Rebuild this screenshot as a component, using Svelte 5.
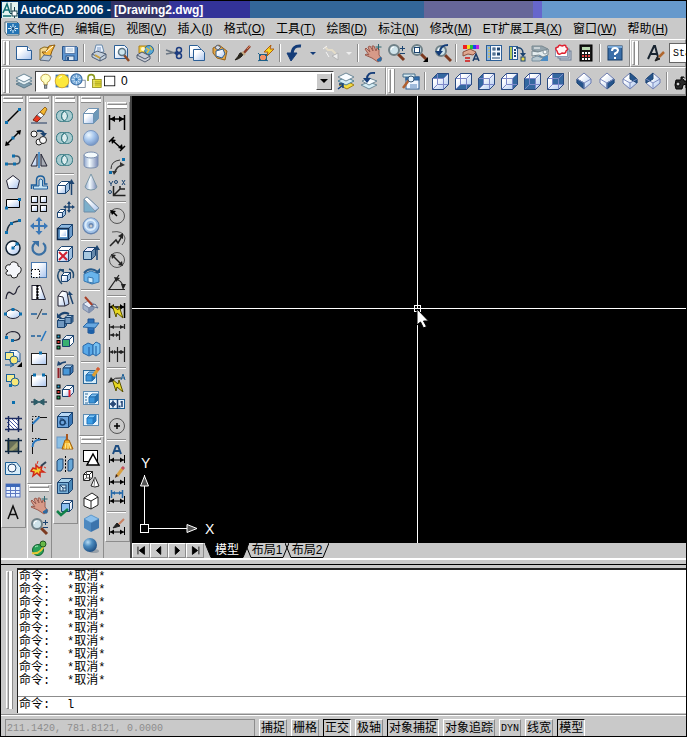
<script lang="ts">
  const NAVY = '#1c4470';
  const BLUE = '#3a78b8';
  const ICE = 'url(#ice)';

  // small drawing helpers, every icon lives on a 20x20 grid
  const p = (d: string, fill = 'none', stroke = '#000', w = 1) =>
    `<path d="${d}" fill="${fill}" stroke="${stroke}" stroke-width="${w}"/>`;
  const c = (x: number, y: number, r: number, fill = 'none', stroke = '#000', w = 1) =>
    `<circle cx="${x}" cy="${y}" r="${r}" fill="${fill}" stroke="${stroke}" stroke-width="${w}"/>`;
  const rect = (x: number, y: number, w: number, h: number, fill = 'none', stroke = '#000', sw = 1) =>
    `<rect x="${x}" y="${y}" width="${w}" height="${h}" fill="${fill}" stroke="${stroke}" stroke-width="${sw}"/>`;
  const dot = (x: number, y: number, fill = '#0b6fae') => rect(x - 2, y - 2, 3, 3, fill, 'none');
  const cube = (x: number, y: number, s: number, d: number, front = ICE, top = '#fff', side = '#9dbfe0', line = NAVY) =>
    p(`M${x} ${y}l${d} ${-d}h${s}l${-d} ${d}z`, top, line) +
    p(`M${x + s} ${y}l${d} ${-d}v${s}l${-d} ${d}z`, side, line) +
    p(`M${x} ${y}h${s}v${s}h${-s}z`, front, line);
  const wire = (face: string) =>
    p('M2.5 7.5l5-5h11v11l-5 5h-11z', ICE, '#6a78c0') +
    p(face, '#3468a0', NAVY) +
    p('M2.5 7.5h11v11M13.5 7.5l5-5M7.5 2.5v11h11M7.5 13.5l-5 5', 'none', '#7c88c8') +
    p('M2.5 7.5l5-5h11v11l-5 5h-11z', 'none', '#284a80');
  const iso = (face: string) =>
    p('M10 2l7 6v4l-7 6l-7-6v-4z', ICE, '#6c7cb0') +
    p(face, '#24548c', NAVY) +
    p('M3 8l7 4l7-4M10 12v6', 'none', '#7c8cc0');
  const lens = (x = 8, y = 7) =>
    p(`M${x + 4} ${y + 4}l6 6`, 'none', '#7c3a20', 3) + c(x, y, 5, '#cfe3ea', '#6f8087', 2) +
    p(`M${x - 3} ${y}q0-3 3-3`, 'none', '#fff');
  const hand =
    p('M3 5l4 4l-2-5l2-1l3 5l-1-5l2 0l2 5l1-3l2 1l0 6l3 4l-4 3l-6-4l-7-3l1-1l3 1l-4-6z', '#d79a88', '#9a5c50') +
    p('M14 17l4-3v4h-3z', '#2d6aa0', '#2d6aa0') +
    p('M15.500 1v6M12.500 4h6', 'none', '#2c6670');
  const bracket = (y = 16) => p(`M2.500 ${y - 5}v8M17.500 ${y - 5}v8M3 ${y}h14`) + p(`M3 ${y}l4-2.500v5zM17 ${y}l-4-2.500v5z`, '#000', 'none');
  const rings =
    '<rect x="1.500" y="4.500" width="11" height="11" rx="5" fill="#a9ccd0" stroke="#2f7680"/>' +
    '<rect x="6.500" y="4.500" width="11" height="11" rx="5" fill="#a9ccd0" stroke="#2f7680"/>' +
    p('M9.500 5q-6 5 0 10q6-5 0-10', '#dcecee', '#2f7680');
  const sheet = (x: number, y: number, w = 11, h = 12) => p(`M${x} ${y}h${w - 3}l3 3v${h - 3}h${-w}z`, ICE, '#2c5f96');
  const bolt = (x: number, y: number) => p(`M${x} ${y}l6 5l1-4l4 12l-6-5l-1 4z`, '#e8d820', '#5a5200');
  const legend = dot(4, 5, '#27a0d0') + dot(4, 10.500, '#d03028') + dot(4, 16, '#20a060') +
    rect(2, 3, 3, 3) + rect(2, 8.500, 3, 3) + rect(2, 14, 3, 3);
  const pyramidBrush = p('M2 10l5-3l6 3l-5 4z', '#e4ecf8', '#7c8aa8') + p('M2 10v5l6 4v-5z', '#a4b4cc', '#7c8aa8') + p('M8 14l5-4v5l-5 4z', '#8094b4', '#7c8aa8');

  const icons: Record<string, string> = {
    new: p('M2.500 3.500h11l4 4v9h-15z', ICE, '#2c5f96') + p('M13.500 3.500v4h4', '#fff', '#2c5f96'),
    open: p('M3 6l4-2l8 1l-4 12l-8 0z', '#f3d68a', '#8a6a1c') + p('M5 9l4 0l3-6l6-1l-3 6l-3 9z', '#f7b93c', '#8a5a10') + p('M3 17l4-5l8 1l-3 5z', '#b8c8d8', '#5c6c84') + p('M9 9l7-6', 'none', '#fff'),
    save: p('M2.500 3.500h14l1 1v13h-14l-1-1z', '#5c94d0', '#2a5488') + rect(5, 3.500, 10, 7, '#f2f8ff', '#5c7ca8') + rect(6, 13, 8, 4.500, '#dce8f4', '#2a5488') + p('M7 6h6M7 8h6', 'none', '#a8c0d8') + rect(7, 14, 2, 3, '#2a5488', 'none'),
    print: p('M5 10l2-8h6l2 7z', '#eaf2ff', '#6888a8') + p('M3 11l5-3l9 3v4l-6 3l-8-4z', '#c4d0dc', '#4c5c74') + p('M3 11l8 4l6-4M11 15v3', 'none', '#4c5c74') + p('M8 5h4M8 7h4', 'none', '#7898c0') + p('M6 12l5 3', 'none', '#c8a040', 2),
    preview: sheet(2.500, 2.500, 13, 13) + p('M12 12l5 6', 'none', '#8c4a28', 2.500) + c(10, 9, 3.500, '#cfe6f0', '#5c7484', 1.500),
    publish: p('M4 3h9l-1 7h-8z', '#f4d040', '#a87c18') + c(14, 7, 4.500, '#58a8d8', '#2c6890') + p('M11 5l3 2l-2 3M15 4l2 3', 'none', '#e0c040', 1.500) + p('M2 12l5-3l8 4v3l-5 3l-8-4z', '#c8ccd4', '#505c70') + p('M2 12l8 4l5-3', 'none', '#505c70') + c(8, 6, 2, '#fff8d0', 'none'),
    cut: p('M2 7l11 4M2 11l11-2', 'none', '#6a7684', 1.500) + c(15, 7, 2.500, 'none', '#1c3c80', 1.500) + c(15, 13, 2.500, 'none', '#1c3c80', 1.500) + p('M11 10l3-1M11 10l3 2', 'none', '#1c3c80', 2),
    copy: sheet(2.500, 2.500) + sheet(6.500, 6.500, 11, 11),
    paste: p('M3 5l6-3l8 6l-2 9l-8-2l-4-5z', '#e4a848', '#946018') + p('M7 2l4 2l-3 3l-3-2z', '#d8dce4', '#586478') + p('M6 8l7-2l2 5l-3 4l-6-2z', ICE, '#2c5f96'),
    match: p('M17 3l-7 8', 'none', '#8c3c28', 2.500) + p('M17 3l-3 3', 'none', '#d88860') + p('M11 10q-2 5-9 7q3-3 5-7z', '#28241c', '#28241c') + p('M9 9l3 3', 'none', '#c8b088', 2),
    blockedit: rect(3.500, 11.500, 7, 6, '#f09068', '#1c5f88') + p('M2 10l3 3M12 10l-3 3M2 18l3-2M12 18l-3-2', 'none', '#1c5f88') + p('M8 9l7-7l-1 4h4l-7 7l1-4z', '#f8d820', '#b05c10'),
    undo: p('M16 3q-9-1-9 9', 'none', '#143c78', 3) + p('M2 10h10l-6 8z', '#143c78', '#143c78'),
    redo: p('M4 4l3 3l4 0l4 4', 'none', '#e4dcc8', 2) + p('M11 13l6-3v7z', '#eee', '#b4b4b4') + p('M2 6l4-3M5 9l3 5', 'none', '#f4f4f4'),
    pan: hand,
    zoomrt: lens() + p('M16.500 3v5M14 5.500h5M14 10.500h5', 'none', '#1c4470'),
    zoomwin: lens() + rect(5.500, 4.500, 5, 5, '#fff', '#1c4470') + p('M19 14v5h-5z', '#000', 'none'),
    zoomprev: lens(9, 8) + p('M16 2q-7 0-8 6', 'none', '#143c78', 2) + p('M3 8h8l-4 5z', '#143c78', 'none'),
    props: rect(2, 2, 4, 4, '#f02020', 'none') + rect(6, 2, 3, 4, '#f0e020', 'none') + rect(9, 2, 3, 4, '#20c040', 'none') + rect(12, 2, 3, 4, '#2040f0', 'none') + rect(15, 2, 3, 4, '#c020e0', 'none') + p('M2 9l7-3l6 3l-3 3l-5-1l-5 2z', '#e0a890', '#8c5040') + p('M4 15h5M4 18h5', 'none', '#d04040', 2) + p('M12 18l3-7l3 7M13 16h4', 'none', '#1c3c68', 1.500),
    dc: rect(2.500, 2.500, 15, 15, '#f4f8ff', '#2c5f96') + rect(2.500, 2.500, 4, 15, '#8cb4e0', '#2c5f96') + p('M4 5h2M4 8h2M4 11h2M4 14h2', 'none', '#e8c030') + rect(9, 5, 2, 2, '#fff', NAVY) + rect(13.500, 5, 2, 2, '#fff', NAVY) + rect(9, 10, 2, 2, '#fff', NAVY) + rect(13.500, 10, 2, 2, '#fff', NAVY) + p('M8 15h8', 'none', NAVY),
    palettes: rect(2.500, 3.500, 8, 13, '#f4f8ff', '#2c5f96') + rect(2.500, 3.500, 3, 13, '#b0cc60', '#2c5f96') + p('M7 7h2M7 10h2M7 13h2', 'none', NAVY, 2) + p('M9 5q7-1 7 5', 'none', NAVY, 1.500) + p('M13 10h6l-3 4z', NAVY, 'none') + rect(14, 14, 4, 4, '#e8d850', NAVY),
    sheets: rect(9, 11, 9, 7, '#4c8cc4', 'none') + p('M2 3h10l6 3v3l-9 0l-7-2z', '#94a4ac', '#788890') + p('M2 8l6 1l10-3v6l-5 2l-4-2l-7 1z', '#e4ecee', '#788890') + p('M2 15l5-2l6 2l-3 3h-8z', '#b8c8d0', '#7890a0') + c(15, 9, 2, '#f8fafa', '#8898a0') + p('M4 5h6', 'none', '#fff'),
    markup: rect(7, 8, 11, 9, '#c8d0dc', '#6c7c94') + rect(5, 6, 11, 9, '#dce4f0', '#6c7c94') + rect(2.500, 4.500, 12, 9, '#fff', '#8c9cb4') + p('M4 8q-3-3 1-4q1-3 4-1q4-2 4 1q3 2 0 4q0 3-4 2q-4 3-5-2z', '#fff4f4', '#e02030', 1.500),
    calc: rect(4, 2, 12, 16, '#181818', '#000') + rect(6, 4, 8, 3, '#b8d8b0', 'none') + p('M6 10h2M9 10h2M12 10h2M6 16h2M9 16h2M12 16h2', 'none', '#fff', 2) + p('M6 13h2M9 13h2M12 13h2', 'none', '#e04040', 2),
    help: rect(3, 3, 14, 14, '#3a6ea8', '#143c68') + p('M3 3h14v2h-14z', '#78a8d8', 'none') + p('M7 8q0-3 3-3q3 0 3 2.500q0 1.500-3 3v1.500', 'none', '#fff', 2) + rect(9, 14, 2, 2, '#fff', 'none'),
    textstyle: p('M2 16l6-13h1l3 11M4 11h7', 'none', '#182430', 2) + p('M18 9l-5 5', 'none', '#b06830', 2.500) + p('M9 18l2-4l3 2z', '#202020', '#202020'),

    layers: p('M2 13l8-3l8 3l-8 4z', '#7f9fb0', '#5c7888') + p('M2 10l8-4l8 4l-8 4z', '#e4f0f4', '#6c8898') + p('M2 7l8-4l8 4l-8 4z', '#f8fcff', '#6c8898'),
    layercur: p('M3 14l8-4l7 4l-7 4z', '#f4dc40', '#a08018') + p('M2 10l8-4l8 4l-8 4z', '#d4ecf4', '#4c8098') + p('M2 6l8-4l8 4l-8 4z', '#f8fcff', '#6c8898') + p('M2 18l5-4M3 13h4v4', 'none', '#104080', 1.500),
    layerprev: p('M2 14l8-3l8 3l-8 4z', '#d4ecf4', '#6c8898') + p('M3 10l7-3l8 3l-8 4z', '#f8fcff', '#6c8898') + p('M16 2q-8-1-8 6', 'none', '#143c78', 2) + p('M4 7h8l-4 5z', '#143c78', 'none'),
    bulb: p('M7.500 15v-3q-4-2-4-5q0-5 6-5.500q6 .500 6 5.500q0 3-4 5v3z', '#ffffc0', '#b08c28') + rect(8, 15, 3, 4, '#a0a8b0', '#505860') + p('M8 5q-1 1-1 3', 'none', '#fff'),
    sun: rect(2, 2, 16, 16, '#3c78b0', 'none') + c(10, 10, 8.500, '#fce83c', '#d8a020') + p('M6 7q1-2 4-3', 'none', '#fffbd0', 1.500),
    freeze: rect(10, 9, 9, 9, '#fff', '#6c7c90') + c(8, 8, 7, '#7cacd8', '#3c70a8', 1.500) + p('M2 8h12M8 2v12M4 4l8 8M12 4l-8 8', 'none', '#e0f0ff') + c(8, 8, 2, '#3c80c0', 'none'),
    lock: p('M2.500 10v-4q0-4 4-4q4 0 4 4v4', 'none', '#8c9a20', 2) + rect(8, 8, 11, 10, '#e8e038', '#8c8818') + p('M8 11h11M8 13h11M8 15h11', 'none', '#a8a020') + p('M10 9v8', 'none', '#fffcc0'),
    swatch: rect(3, 4, 13, 12, '#fff', '#000'),

    named: rect(5, 6, 13, 12, '#f0f6ff', '#2c5f96') + rect(5, 6, 13, 3, '#3070b0', '#2c5f96') + p('M2 3h12v3h-12z', '#d8ecf4', '#48708c') + p('M8 9l-6 8', 'none', '#b06030', 2.500) + c(10, 8, 3, '#e8f4fc', '#385878') + p('M9 14h7M9 16h7', 'none', '#5080b8'),
    vtop: wire('M2.500 7.500l5-5h11l-5 5z'),
    vbottom: wire('M2.500 18.500l5-5h11l-5 5z'),
    vleft: wire('M2.500 7.500l5-5v11l-5 5z'),
    vright: wire('M13.500 7.500l5-5v11l-5 5z'),
    vfront: wire('M2.500 7.500h11v11h-11z'),
    vback: wire('M7.500 2.500h11v11h-11z'),
    isosw: iso('M3 8l7 4v6l-7-6z'),
    isose: iso('M17 8l-7 4v6l7-6z'),
    isone: iso('M10 2l7 6v4l-7-4z'),
    isonw: iso('M10 2l-7 6v4l7-4z'),
    camera: p('M3 14l1-5h5v-3h3v4l2 0l1-4h3v11h-4v-4l-3 1l-1 4h-6z', '#282828', '#000') + c(6, 13, 2, '#ccc', '#000') + p('M11 7l4 3', 'none', '#eee'),

    line: p('M4 16l12-12', 'none', '#000', 1.500) + dot(4, 17) + dot(17, 4),
    xline: p('M4 16l12-12', 'none', '#000', 1.500) + p('M2 18l1-5l4 4zM18 2l-1 5l-4-4z', '#000', 'none') + dot(10.500, 10.500),
    pline: p('M4 14h9q4 0 4-4q0-4-4-4h-1', 'none', '#456', 1.500) + dot(4, 14.500) + dot(12, 14.500) + dot(11, 6.500),
    polygon: p('M10 3.500l6.500 5l-2 8h-9l-2-8z', ICE, '#223'),
    rectangle: p('M3.500 5.500h13v8h-13z', ICE, '#000') + dot(4, 14.500) + dot(17, 6),
    arc: p('M4 17q0-11 12-12', 'none', '#234', 1.500) + dot(4, 17) + dot(9, 8) + dot(17, 5),
    circle: c(10, 10, 7, ICE, '#123', 1.500) + p('M10 10l4-4', 'none', '#123') + dot(10.500, 10.500) + dot(14.500, 6.500),
    revcloud: p('M5 11q-4-2-2-5q2-2 4-1q1-4 5-3q4 1 3 4q4 1 3 5q-1 3-3 3q0 4-4 4q-3 0-3-3q-4 1-5-1q-1-2 2-3z', '#f4f6fa', '#222'),
    spline: p('M3 17q1-9 5-6q3 3 5-1q1-5 4-6', 'none', '#223', 1.200),
    ellipse: '<ellipse cx="10" cy="10" rx="7" ry="4.500" fill="url(#ice)" stroke="#223"/>' + dot(3, 10.500) + dot(18, 10.500) + dot(10.500, 6),
    ellarc: p('M10 14.500q7 0 7-4q-1-5-8-5q-5 1-6 4', 'none', '#223', 1.200) + dot(4, 12) + dot(10, 15),
    insert: sheet(7, 2.500, 10, 11) + rect(2.500, 4.500, 8, 7, '#f4ec90', '#1c5f96') + c(11, 12, 4, '#f8e878', '#1c5f96') + p('M2 17h8M7 15l4 2l-4 2', 'none', '#1c5f96') + p('M19 14v5h-5z', '#000', 'none'),
    block: rect(3.500, 4.500, 8, 7, '#f4ec90', '#1c5f96') + c(12, 12, 4, '#f8e878', '#1c5f96') + dot(8, 16),
    point: dot(11, 11),
    hatch: p('M4 4h12v12h-12z', '#fff', 'none') + p('M4 8l8 8M4 4l12 12M8 4l8 8M12 4l4 4M4 12l4 4', 'none', '#4858a8') + p('M2 4.500h17M2 15.500h17M5.500 2v16M15.500 2v16', 'none', '#1c2c60', 1.500),
    gradient: rect(4, 4, 12, 12, '#687058', 'none') + p('M4 16l12-12v6l-8 6z', '#9a9c70', 'none') + p('M2 4.500h17M2 15.500h17M5.500 2v16M15.500 2v16', 'none', '#102840', 1.500),
    region: p('M2.500 4.500h11l4 5v7h-15z', '#d8ecf8', '#1c5f96') + c(9, 10, 4, '#f4f8fc', NAVY),
    table: rect(3, 4, 14, 13, '#e8f2ff', '#5c78c0') + rect(3, 4, 14, 3, '#3c68b8', 'none') + p('M3 10.500h14M3 13.500h14M7.500 7v10M12.500 7v10', 'none', '#5c78c0'),
    mtext: p('M5 17l5-13l5 13M7 12.500h6', 'none', '#101010', 1.500),

    erase: p('M2 17h16', 'none', '#203860') + p('M4 14l4-5l4 3l-4 4z', '#e83820', '#7c2010') + p('M8 9l3-3l4 3l-3 3z', '#f8fafc', '#6c7480') + p('M11 6l5-5l2 2l-3 6z', '#f4b830', '#94641c'),
    copyobj: c(5, 6, 3, '#f8f8f8', '#222') + c(10, 14, 3, '#f8f8f8', '#222') + c(14, 12, 3.500, '#f8f8f8', '#222') + p('M8 3q6-1 7 3', 'none', NAVY, 2) + p('M11 5h7l-3 4z', NAVY, 'none'),
    mirror: p('M8 4v12h-6z', ICE, '#223') + p('M12 4v12h6z', '#a8acb4', '#223') + p('M10 2v16', 'none', '#2c80c8', 1.500),
    offset: p('M2.500 17v-4h5v-5q0-4 4-4q4 0 4 4v4h3', 'none', '#1c5f9c', 1.500) + p('M4.500 17h14v-3h-5v-6q-2-2-3.500 0v6h-5.500z', '#c8e4f4', '#1c5f9c'),
    array: rect(2.500, 2.500, 6, 6, ICE, '#111') + rect(11.500, 2.500, 6, 6, ICE, '#111') + rect(2.500, 11.500, 6, 6, ICE, '#111') + rect(11.500, 11.500, 6, 6, ICE, '#111'),
    move: p('M10 4v12M4 10h12', 'none', BLUE, 2) + p('M10 1l3.500 4h-7zM10 19l3.500-4h-7zM1 10l4-3.500v7zM19 10l-4-3.500v7z', BLUE, 'none'),
    rotate: p('M6 5a6.500 6.500 0 1 0 8 0', 'none', '#3a70a4', 2.200) + p('M3 3h7v6z', '#3a70a4', 'none'),
    scale: rect(2.500, 2.500, 15, 15, ICE, '#4878b0') + '<rect x="2.500" y="9.500" width="8" height="8" fill="#fff" stroke="#000" stroke-dasharray="1.500 1.500"/>',
    stretch: rect(3, 3.500, 5, 14, '#fff', '#223') + p('M8.500 3.500l3 0l5 14h-8z', ICE, '#223') + '<path d="M8.500 3v15" stroke="#000" stroke-width="2" stroke-dasharray="2 1"/>',
    trim: p('M2 10h6M13 10h5', 'none', '#1c5f9c', 1.500) + p('M8 15l5-10', 'none', '#333'),
    extend: p('M2 10h4M8 10h4', 'none', '#1c5f9c', 1.500) + p('M12 15l5-10', 'none', '#2878c0', 1.500),
    breakpt: rect(2.500, 5.500, 15, 11, ICE, '#222') + dot(12, 5.500),
    breakln: p('M5 5.500h-2.500v11h15v-11h-2.500', ICE, '#222') + dot(6, 5.500) + dot(15, 5.500),
    join: p('M2 10h5M13 10h5', 'none', '#345', 1.500) + p('M5 7l5 3l-5 3zM15 7l-5 3l5 3z', '#2c5c68', '#2c5c68'),
    chamfer: '<path d="M3.500 9v-6.500h7" fill="none" stroke="#000" stroke-dasharray="1.500 1.500"/>' + p('M3.500 10l7-7', 'none', '#2878c0', 2) + p('M3.500 18v-8M11 3.500h7', 'none', '#111'),
    fillet: '<path d="M3.500 9v-6.500h7" fill="none" stroke="#000" stroke-dasharray="1.500 1.500"/>' + p('M3.500 11q0-7 8-7.500', 'none', '#2878c0', 2) + p('M3.500 18v-7M11 3.500h7', 'none', '#111'),
    explode: p('M4 10l3 1l0-4l3 3l3-2l-1 4l3 2l-4 0l0 4l-3-3l-4 3l1-4l-3-1z', '#f4d030', '#d02818', 1.500) + p('M12 8l5-4', 'none', '#345', 2) + p('M8 6l1-3M15 9l2 1', 'none', '#e03020'),
    orbit: c(9, 11, 5.500, '#28a058', '#106030') + p('M3 14q9 2 13-10', 'none', '#e8c838', 2) + c(14, 5, 3, '#68b848', '#205820') + p('M6 8q1-1 3-1', 'none', '#b0f0c0'),

    union: rings,
    extrude: cube(2.500, 7.500, 8, 4, ICE) + p('M16.500 17v-12', 'none', NAVY, 1.500) + p('M13.500 6l3-5l3 5z', NAVY, 'none'),
    moveface: cube(2.500, 12.500, 5, 3, ICE) + p('M14 3v8M10 7h8', 'none', NAVY, 1.500) + p('M14 1l2 3h-4zM14 13l2-3h-4zM8 7l3-2v4zM20 7l-3-2v4z', NAVY, 'none'),
    offsetface: cube(2.500, 6.500, 11, 4, '#5c94c8', '#8cb8e0', '#6c9ccc') + rect(5.500, 8.500, 6, 6, ICE, '#fff') + p('M2.500 6.500h11v11h-11z', 'none', '#102c50', 1.500),
    deleteface: cube(2.500, 6.500, 11, 4, ICE) + p('M4 8l8 8M12 8l-8 8', 'none', '#d02030', 2),
    rotateface: cube(6.500, 9.500, 6, 3, ICE) + p('M6 3q-7 7 1 15M14 3q6 2 4 9', 'none', '#244c70', 1.500) + p('M3 3h6v4z', '#244c70', 'none'),
    taperface: p('M3 8l4-5l5 1l2 12l-4 2h-7z', ICE, '#223') + p('M3 8l5 1l2 9', 'none', '#223') + p('M18 16l-3-9', 'none', NAVY, 1.500) + p('M14 3l4 4h-5z', NAVY, 'none'),
    copyface: cube(2.500, 10.500, 7, 2, '#7098c0', '#a8c8e0', '#4878a8') + cube(10, 7.500, 6, 2, '#7098c0', '#a8c8e0', '#4878a8') + p('M4 6q4-5 10-2', 'none', NAVY, 2) + p('M2 3v5h5z', NAVY, 'none'),
    colorface: legend + cube(7.500, 7.500, 7, 4, '#38b070', ICE, '#fff'),
    copyedge: cube(8, 8, 7, 3, '#4898d8', '#a8d0f0', BLUE) + p('M3.500 8v10', 'none', '#902028', 2) + p('M5.500 8v10', 'none', '#555') + p('M4 5q3-3 7-3', 'none', NAVY, 1.500) + p('M2 6l1-5l4 3z', NAVY, 'none'),
    coloredge: legend + cube(7.500, 7.500, 7, 4, ICE, '#fff', ICE) + p('M14.500 8v7', 'none', '#e02030', 2),
    imprint: cube(2.500, 6.500, 11, 4, '#6ca4dc', '#b8d8f4', BLUE) + c(7.500, 12.500, 2.500, 'none', NAVY, 1.500) + p('M5 9q5-1 6 5', 'none', NAVY),
    clean: rect(2, 5, 9, 11, '#8cc0e4', '#6898c8') + p('M12 2v6', 'none', '#a85820', 2) + p('M10 8h4l4 9h-11z', '#f0b028', '#a06010') + p('M11 11l-1 6M13 11v6M14 11l2 6', 'none', '#fff0a0'),
    separate: p('M2 7l2-2h4v9l-2 3h-4z', '#68a8d8', NAVY) + p('M13 7l2-2h3v9l-2 3h-3z', '#68a8d8', NAVY) + '<path d="M10.500 2v16" stroke="#000" stroke-dasharray="2 1.500"/>',
    shell: cube(2.500, 6.500, 11, 4, '#78b0d8', '#a8d0e8', '#4888b8') + rect(5, 9, 6, 6, '#d0e8f4', NAVY) + p('M5 9l3 3h3M8 12v3', 'none', NAVY),
    check: cube(6.500, 5.500, 8, 3, '#8cc0f0', ICE, ICE) + p('M2 13l4 4l7-6', 'none', '#108048', 2.500),

    sbox: cube(2.500, 7.500, 10, 5, ICE, '#fff', '#6c98b8', '#7094b4'),
    ssphere: c(10, 10, 7.500, 'url(#ball)', '#7c98c0'),
    scyl: p('M3 5v10q0 3 7 3q7 0 7-3v-10', 'url(#tube)', '#7c90b0') + '<ellipse cx="10" cy="5" rx="7" ry="3" fill="#f4fafc" stroke="#7c90b0"/>',
    scone: p('M10 2l6 13q-1 3-6 3q-5 0-6-3z', 'url(#tube)', '#7c98a8'),
    swedge: p('M3 5l3-2l12 11l-4 4h-11z', '#7cb0cc', '#6c8ca8') + p('M6 3l12 11l-4 3l-11-12z', ICE, '#8094a8'),
    storus: c(10, 10, 5, 'none', '#6484b0', 7) + c(10, 9.500, 5, 'none', '#a4c4e8', 5) + c(9.500, 9, 5, 'none', '#dcecfa', 2),
    sextrude: cube(2.500, 7.500, 8, 4, '#a8c8e0', '#eef', '#68a') + p('M16 16v-11', 'none', NAVY, 1.500) + p('M13 6l3-5l3 5z', NAVY, 'none'),
    srevolve: p('M3 8l7-3l8 3v8l-7 2l-8-3z', '#68b4ec', '#3878b0') + p('M7 11l5 1v5l-5-1z', '#c8e8fc', '#3878b0') + p('M3 7q6-7 14-1', 'none', '#285c8c', 2) + p('M14 7h5v-5z', '#285c8c', 'none'),
    sslice: pyramidBrush + p('M4 3l8 9', 'none', '#a84028', 2) + p('M10 12l4-2l3 4z', '#d8e0e8', '#607090'),
    ssection: p('M7 3h6v14h-6z', '#2c70b8', '#1c5090') + p('M2 11l4-4h12l-4 5z', '#68a8e0', '#2868a8') + p('M8 14h5v3q-3 2-5 0z', '#1c60a8', 'none'),
    sinterf: p('M2 8l5-3l5 2v9l-4 2l-6-3z', '#58a8e8', '#2868a8') + p('M12 7l3-3l4 2v9l-4 3l-3-2z', '#78c0f0', '#2868a8') + p('M8 9v8M15 8v9', 'none', '#1c58a0'),
    sdraw: rect(2.500, 4.500, 13, 13, '#d8ecf8', '#2c6898') + cube(5, 9, 6, 3, '#3c94d8', '#80c0f0', '#2470b0', '#2470b0') + p('M18 2l-6 8', 'none', '#e0a030', 3) + p('M18 2l-2 2', 'none', '#d05840', 3),
    sview: rect(2.500, 3.500, 15, 13, '#e8f4fc', '#5c8cb4') + cube(8, 9, 6, 3, '#3c94d8', '#80c0f0', '#2470b0', '#2470b0') + p('M4 6h3M4 9h2M4 12h2M4 15h3', 'none', '#2c6898'),
    sprofile: rect(2.500, 4.500, 15, 11, '#e8f4fc', '#5c8cb4') + cube(6, 8, 6, 3, '#3ca0e8', '#80c8f8', '#2478c0', '#2478c0'),
    shade2d: rect(2.500, 3.500, 14, 11, '#fff', '#000') + p('M12 7l6 11h-12z', '#fff', '#000', 1.500),
    shade3d: cube(2.500, 5.500, 6, 3, '#fff', '#fff', '#fff', '#222') + p('M5.500 3v6h6M5.500 9l-3 2', 'none', '#555') + p('M14 8l4 9q-4 2-8 0z', '#fff', '#222') + p('M14 8l-1 10', 'none', '#888'),
    hidden: p('M3 7l8-5l6 4v8l-7 4l-7-3z', '#fff', '#222') + p('M3 7l7 3l7-4M10 10v8', 'none', '#222'),
    flat: p('M3 6l7-4l8 4l-8 4z', '#8cc0ec', '#5c98cc') + p('M3 6l7 4v9l-7-4z', '#4c88c0', 'none') + p('M18 6l-8 4v9l8-4z', '#3c74ac', 'none'),
    gouraud: '<ellipse cx="13" cy="16" rx="5" ry="2" fill="#98a0a8"/>' + c(9, 10, 7, 'url(#deep)', 'none'),

    dlinear: p('M2.500 3v15M17.500 3v15M3 7h14', 'none', '#000', 1.500) + p('M3 7l5-3v6zM17 7l-5-3v6z', '#000', 'none'),
    daligned: p('M2 8l5-5M13 17l5-5M5 6l10 9', 'none', '#000', 1.500) + p('M4 5l5 1l-4 4zM16 15l-5-1l4-4z', '#000', 'none'),
    darc: dot(4, 17) + dot(17, 4) + p('M4 13q0-8 9-9', 'none', '#333') + p('M8 17q1-7 8-8', 'none', '#333', 1.500) + p('M5 15l5 0l-3 4zM18 9l-5-3v5z', '#333', 'none'),
    dordinate: p('M6.500 8v9.500h12M7 17l6-6h5M13 11v-3', 'none', '#222', 1.500) + p('M2 3l2 3l2-3M4 6v2M15 2l3 5M18 2l-3 5', 'none', '#1c4470') + c(9, 4, 1.500, 'none', '#1c4470') + c(3, 14, 1.500, 'none', '#1c4470'),
    dradius: c(10, 10, 7.500, 'none', '#555') + p('M10 10l-5-5', 'none', '#000', 1.500) + p('M3 4l6 1l-4 4z', '#000', 'none'),
    djogged: p('M5 4q11-2 13 6q0 4-3 7', 'none', '#555') + p('M3 18l6-6l2 3l4-7', 'none', '#222', 1.500) + p('M16 5v6l-5-3z', '#222', 'none'),
    ddiameter: c(10, 10, 7.500, 'none', '#555') + p('M6 6l8 8', 'none', '#222', 1.500) + p('M4 4l5 1l-4 4zM16 16l-5-1l4-4z', '#222', 'none'),
    dangular: p('M12 3l-10 14.500h16M8 7q7 1 8 8', 'none', '#222', 1.200) + p('M7 5l6 1l-4 4zM16 18l-2-6h5z', '#222', 'none'),
    dquick: p('M2.500 3v15M17.500 3v15M3 7h14', 'none', '#000', 1.500) + p('M3 7l4-3v6zM17 7l-4-3v6z', '#000', 'none') + bolt(5, 5),
    dbaseline: p('M2.500 2v16M17.500 2v5M12.500 9v9M3 5h14M3 13h9', 'none', '#222', 1.200) + p('M3 5l4-2v4zM17 5l-4-2v4zM3 13l4-2v4zM12 13l-3-2v4z', '#222', 'none'),
    dcontinue: p('M2.500 3v15M10.500 3v15M17.500 3v15M3 8h14', 'none', '#222', 1.200) + p('M3 8l3-2v4zM10 8l-3-2v4zM11 8l3-2v4zM17 8l-3-2v4z', '#222', 'none'),
    dleader: bolt(5, 7) + p('M4 9q4-4 10-3', 'none', '#222') + p('M1 11l3-6l3 4z', '#222', 'none') + p('M14 8l2-6l2 6M15 6h3', 'none', '#1c5f96'),
    dtolerance: rect(2.500, 5.500, 15, 9, '#e4f0fc', '#1c5f96') + p('M10.500 5v10M6 6.500v7M3 10h6M15 7v6M13.500 8h1', 'none', '#1c3f70', 1.500) + c(6, 10, 2, 'none', '#1c3f70') + rect(12, 12, 1, 1, NAVY, NAVY),
    dcenter: c(10, 10, 7.500, 'none', '#555') + p('M10 7v6M7 10h6', 'none', '#000', 1.500),
    dedit: p('M6 10l3-8h2l3 8M7.500 7h5', 'none', '#1c4c80', 2) + bracket(),
    dtedit: p('M16 2l-6 8', 'none', '#d8a040', 3) + p('M8 12l1-4l2 2z', '#402010', 'none') + p('M15 3l2-2', 'none', '#c05060', 3) + bracket(),
    dupdate: p('M4.500 2v8M15.500 2v8M5 5h10', 'none', '#2468a8', 1.500) + p('M5 5l3-2v4zM15 5l-3-2v4z', '#2468a8', 'none') + bracket(13),
    dstyle: p('M17 3l-6 6', 'none', '#c88060', 2) + p('M6 12l4-5l3 3z', '#222', '#222') + bracket()
  };

  const standard = 'new open save | print preview publish | cut copy paste match blockedit | undo caret redo caretoff | pan zoomrt zoomwin zoomprev | props dc palettes sheets markup calc | help'.split(' ');
  const views = 'named | vtop vbottom vleft vright vfront vback | isosw isose isone isonw | camera'.split(' ');

  const columns = [
    ['line xline pline polygon rectangle arc circle revcloud spline ellipse ellarc insert block point hatch gradient region table mtext'],
    ['erase copyobj mirror offset array move rotate scale stretch trim extend breakpt breakln join chamfer fillet explode', 'pan zoomrt orbit'],
    ['union union union | extrude moveface offsetface deleteface rotateface taperface copyface colorface | copyedge coloredge | imprint clean separate shell check'],
    ['sbox ssphere scyl scone swedge storus | sextrude srevolve | sslice ssection sinterf | sdraw sview sprofile', 'shade2d shade3d hidden flat gouraud'],
    ['dlinear daligned darc dordinate | dradius djogged ddiameter dangular | dquick dbaseline dcontinue | dleader dtolerance dcenter | dedit dtedit dupdate | dstyle']
  ].map((bars) => bars.map((bar) => bar.split(' ')));

  const menus = [
    ['文件', 'F'], ['编辑', 'E'], ['视图', 'V'], ['插入', 'I'], ['格式', 'O'], ['工具', 'T'],
    ['绘图', 'D'], ['标注', 'N'], ['修改', 'M'], ['ET扩展工具', 'X'], ['窗口', 'W'], ['帮助', 'H']
  ];

  const navButtons = [
    { label: 'first', d: 'M4.500 3v9M12 3v9l-6-4.500z' },
    { label: 'previous', d: 'M10 3v9l-5-4.500z' },
    { label: 'next', d: 'M6 3v9l5-4.500z' },
    { label: 'last', d: 'M12.500 3v9M5 3v9l6-4.500z' }
  ];
  const layouts = ['模型', '布局1', '布局2'];
  let activeLayout = $state('模型');

  const history = Array(9).fill('*取消*');
  let command = $state('l');

  let modes = $state([
    { name: '捕捉', on: false },
    { name: '栅格', on: false },
    { name: '正交', on: true },
    { name: '极轴', on: false },
    { name: '对象捕捉', on: true },
    { name: '对象追踪', on: false },
    { name: 'DYN', on: false },
    { name: '线宽', on: false },
    { name: '模型', on: true }
  ]);

  const cursor = { x: 285, y: 212 };
</script>

{#snippet icon(name: string)}
  <svg class="icon" viewBox="0 0 20 20" aria-hidden="true">{@html icons[name]}</svg>
{/snippet}

{#snippet tools(items: string[])}
  {#each items as item}
    {#if item === '|'}
      <span class="sep"></span>
    {:else if item === 'caret' || item === 'caretoff'}
      <button class="caret" class:off={item === 'caretoff'} aria-label="history list"></button>
    {:else}
      <button class="tool" aria-label={item}>{@render icon(item)}</button>
    {/if}
  {/each}
{/snippet}

<svg class="defs" width="0" height="0" aria-hidden="true">
  <defs>
    <linearGradient id="ice" x1="0" y1="0" x2="1" y2="1">
      <stop offset="0.3" stop-color="#ffffff" />
      <stop offset="1" stop-color="#a9c4ee" />
    </linearGradient>
    <linearGradient id="tube">
      <stop offset="0" stop-color="#8ea4cc" />
      <stop offset="0.4" stop-color="#f4fcff" />
      <stop offset="1" stop-color="#7888b4" />
    </linearGradient>
    <radialGradient id="ball" cx="0.35" cy="0.3" r="0.75">
      <stop offset="0" stop-color="#eef8ff" />
      <stop offset="0.5" stop-color="#a4c4ec" />
      <stop offset="1" stop-color="#7090c0" />
    </radialGradient>
    <radialGradient id="deep" cx="0.35" cy="0.3" r="0.75">
      <stop offset="0" stop-color="#b8dcf4" />
      <stop offset="0.4" stop-color="#4c8cc0" />
      <stop offset="1" stop-color="#1c4c80" />
    </radialGradient>
  </defs>
</svg>

<div class="window">
  <header class="title-bar">
    <svg class="logo" viewBox="0 0 16 16" aria-hidden="true">
      <rect width="16" height="16" fill="#e4f4f0" />
      <path d="M1 11l4-9l3 9M2 8h5M1 14h8" fill="none" stroke="#0f6c70" stroke-width="1.500" />
      <path d="M9 1v9M12.500 5v11M8 11.500h8" fill="none" stroke="#17404c" />
      <rect x="10" y="9" width="5" height="5" fill="#fff" stroke="#17404c" />
    </svg>
    <h1>AutoCAD 2006 - [Drawing2.dwg]</h1>
  </header>

  <nav class="menu-bar">
    <svg class="logo" viewBox="0 0 16 16" aria-hidden="true">
      <path d="M1 1h12l2 2v11h-12l-2-3z" fill="#f4fbff" stroke="#4a6878" />
      <rect x="3" y="2" width="12" height="11" fill="#2474b4" />
      <path d="M9 3v9M4 7.500h10M6 5l6 5M12 5l-6 5" stroke="#e0f4ff" />
      <circle cx="9" cy="7.500" r="1.500" fill="#124c84" />
    </svg>
    {#each menus as [name, key]}
      <button class="menu">{name}(<u>{key}</u>)</button>
    {/each}
  </nav>

  <div class="tool-row">
    <div class="bar">
      <span class="grip"></span>
      {@render tools(standard)}
    </div>
    <div class="bar grow">
      <span class="grip"></span>
      <button class="tool style-tool" aria-label="text style">{@render icon('textstyle')}</button>
      <select class="style-select" aria-label="text style name">
        <option>Standard</option>
      </select>
    </div>
  </div>

  <div class="tool-row">
    <div class="bar layer-bar">
      <span class="grip"></span>
      <button class="tool" aria-label="layer manager">{@render icon('layers')}</button>
      <div class="layer-box">
        {#each ['bulb', 'sun', 'freeze', 'lock', 'swatch'] as name}
          {@render icon(name)}
        {/each}
        <select aria-label="layer">
          <option>0</option>
        </select>
        <span class="drop"></span>
      </div>
      {@render tools(['layercur', 'layerprev'])}
    </div>
    <div class="bar grow">
      <span class="grip"></span>
      {@render tools(views)}
    </div>
  </div>

  <main class="workspace">
    <div class="palettes">
      {#each columns as bars, i}
        <div class="column" class:lowered={i === 4}>
          {#each bars as bar}
            <div class="v-bar">
              <span class="v-grip"></span>
              {@render tools(bar)}
            </div>
          {/each}
        </div>
      {/each}
    </div>

    <section class="drawing">
      <div class="canvas">
        <div class="cross-h" style:top="{cursor.y}px"></div>
        <div class="cross-v" style:left="{cursor.x}px"></div>
        <svg class="pointer" style:left="{cursor.x - 3}px" style:top="{cursor.y - 3}px" viewBox="0 0 16 24" aria-hidden="true">
          <rect x="0.500" y="0.500" width="6" height="6" fill="#000" stroke="#fff" />
          <path d="M3.500 1v5M1 3.500h5" stroke="#fff" />
          <path d="M3 4v16l3.500-3l3 6l3-1.500l-3-5.500h5z" fill="#fff" stroke="#000" />
        </svg>
        <svg class="ucs" viewBox="0 0 80 80" aria-hidden="true">
          <g fill="none" stroke="#fff" shape-rendering="crispEdges">
            <rect x="5.500" y="65.500" width="8" height="8" />
            <path d="M9.500 65v-49M14 69.500h48" />
          </g>
          <path d="M9.500 17l4 10h-8zM62 69.500l-10-4v8z" fill="#555" stroke="#fff" />
          <text x="6" y="9">Y</text>
          <text x="70" y="75">X</text>
        </svg>
      </div>

      <div class="layout-tabs">
        {#each navButtons as nav}
          <button class="nav" aria-label={nav.label}>
            <svg viewBox="0 0 16 15"><path d={nav.d} fill="#000" stroke="#000" stroke-width="1" /></svg>
          </button>
        {/each}
        <div class="tabs">
          {#each layouts as name}
            <button class="tab" class:active={activeLayout === name} onclick={() => (activeLayout = name)}>
              <svg viewBox="0 0 44 15" preserveAspectRatio="none" aria-hidden="true">
                <path d="M0 0L6 14.500H38L44 0" />
              </svg>
              <span>{name}</span>
            </button>
          {/each}
        </div>
      </div>
    </section>
  </main>

  <section class="command">
    <span class="grip"></span>
    <div class="command-text">
      <div class="history">
        {#each history as entry}
          <p><span class="prompt">命令:</span>{entry}</p>
        {/each}
      </div>
      <label class="entry">
        <span class="prompt">命令:</span>
        <input bind:value={command} spellcheck="false" />
      </label>
    </div>
  </section>

  <footer class="status-bar">
    <output class="coords">211.1420, 781.8121, 0.0000</output>
    {#each modes as mode}
      <button
        class="mode"
        class:on={mode.on}
        class:latin={mode.name === 'DYN'}
        aria-pressed={mode.on}
        onclick={() => (mode.on = !mode.on)}
      >{mode.name}</button>
    {/each}
  </footer>
</div>

<style>
  :global(body) {
    background: #c9c9c9;
  }

  .window {
    display: flex;
    flex-direction: column;
    box-sizing: border-box;
    height: 100vh;
    min-height: 700px;
    overflow: hidden;
    border: 1px solid #000;
    background: #c9c9c9;
    color: #000;
    font-family: 'Liberation Sans', 'Noto Sans CJK SC', sans-serif;
    font-size: 12px;
  }

  .defs {
    position: absolute;
  }

  button,
  select,
  input {
    margin: 0;
    padding: 0;
    border: 0;
    border-radius: 0;
    background: none;
    color: inherit;
    font: inherit;
    appearance: none;
    outline: none;
  }

  .title-bar {
    display: flex;
    align-items: center;
    gap: 2px;
    flex: none;
    height: 17px;
    padding-left: 1px;
    background: linear-gradient(
      to right,
      #003366 16%,
      #333366 16% 24.5%,
      #333399 24.5% 36.3%,
      #336699 36.3% 61.7%,
      #666699 61.7% 77.6%,
      #6666cc 77.6% 79%,
      #6699cc 79%
    );
    color: #fff;
  }

  .title-bar h1 {
    margin: 0;
    font-size: 12px;
    line-height: 16px;
    white-space: nowrap;
  }

  .logo {
    flex: none;
    width: 16px;
    height: 16px;
  }

  .menu-bar {
    display: flex;
    align-items: center;
    flex: none;
    gap: 11px;
    height: 21px;
    padding-left: 3px;
  }

  .menu-bar .logo {
    margin-right: -6px;
  }

  .menu {
    flex: none;
    line-height: 16px;
    white-space: nowrap;
  }

  .tool-row {
    display: flex;
    flex: none;
    height: 28px;
    overflow: hidden;
  }

  .bar {
    display: flex;
    align-items: center;
    flex: none;
    box-sizing: border-box;
    padding: 0 3px 0 1px;
    border-top: 1px solid #fff;
    border-left: 1px solid #fff;
    border-right: 1px solid #8c8c8c;
    border-bottom: 1px solid #8c8c8c;
  }

  .bar.grow {
    flex: 1 0 0;
    width: 0;
  }

  .layer-bar {
    padding-right: 5px;
  }

  .grip {
    flex: none;
    box-sizing: border-box;
    width: 3px;
    height: 24px;
    margin-right: 6px;
    border: 1px solid #fff;
    border-right-color: #8c8c8c;
    border-bottom-color: #8c8c8c;
    box-shadow: 3px 0 #fff, 4px 0 #8c8c8c;
  }

  .grow .grip {
    margin-right: 8px;
  }

  .icon {
    display: block;
    flex: none;
    width: 20px;
    height: 20px;
  }

  .tool {
    display: flex;
    align-items: center;
    justify-content: center;
    flex: none;
    width: 23px;
    height: 22px;
  }

  .tool:hover {
    background: #dcdcdc;
  }

  .sep {
    flex: none;
    box-sizing: border-box;
    width: 6px;
    height: 18px;
    border-left: 2px solid #c9c9c9;
    border-right: 2px solid #c9c9c9;
    background: linear-gradient(to right, #8c8c8c 50%, #fff 50%);
  }

  .caret {
    display: flex;
    justify-content: center;
    flex: none;
    width: 13px;
  }

  .caret::before {
    content: '';
    border: 3px solid transparent;
    border-top-color: #143c78;
    border-bottom: 0;
  }

  .caret.off::before {
    border-top-color: #eee;
  }

  .style-tool {
    width: 26px;
  }

  .style-select {
    flex: none;
    width: 120px;
    height: 20px;
    padding-left: 3px;
    border: 1px solid #666;
    background: #fff;
    font-family: 'Liberation Mono', monospace;
    font-size: 10px;
  }

  .layer-box {
    display: flex;
    align-items: center;
    box-sizing: border-box;
    width: 299px;
    height: 21px;
    padding: 0 1px 0 2px;
    border: 1px solid #fff;
    border-top-color: #444;
    border-left-color: #444;
    background: #fff;
  }

  .layer-box .icon {
    width: 16px;
    height: 16px;
  }

  .layer-box select {
    flex: 1;
    padding-left: 3px;
  }

  .drop {
    display: flex;
    align-items: center;
    justify-content: center;
    box-sizing: border-box;
    width: 16px;
    height: 17px;
    border: 1px solid #fff;
    border-right-color: #444;
    border-bottom-color: #444;
    background: #c9c9c9;
  }

  .drop::before {
    content: '';
    border: 4px solid transparent;
    border-top-color: #000;
    border-bottom: 0;
  }

  .workspace {
    display: flex;
    flex: 1;
    min-height: 0;
    border-top: 1px solid #8c8c8c;
    border-bottom: 2px solid #fff;
  }

  .palettes {
    display: flex;
    flex: none;
    gap: 1px;
    overflow: hidden;
  }

  .column {
    width: 25px;
  }

  .column.lowered {
    padding-top: 6px;
  }

  .v-bar {
    display: flex;
    flex-direction: column;
    align-items: flex-start;
    box-sizing: border-box;
    padding-bottom: 4px;
    border-left: 1px solid #fff;
    border-right: 1px solid #8c8c8c;
    border-bottom: 1px solid #8c8c8c;
  }

  .v-bar + .v-bar {
    border-top: 1px solid #fff;
  }

  .v-grip {
    flex: none;
    box-sizing: border-box;
    width: 20px;
    height: 3px;
    margin: 0 1px 6px;
    border: 1px solid #fff;
    border-right-color: #8c8c8c;
    border-bottom-color: #8c8c8c;
    box-shadow: 0 3px #fff, 0 4px #8c8c8c;
  }

  .v-bar .tool {
    width: 21px;
  }

  .v-bar .sep {
    width: 19px;
    height: 6px;
    margin: 0 1px;
    border: 0;
    border-top: 2px solid #c9c9c9;
    border-bottom: 2px solid #c9c9c9;
    background: linear-gradient(#8c8c8c 50%, #fff 50%);
  }

  .drawing {
    display: flex;
    flex: 1;
    flex-direction: column;
    min-width: 0;
    border-left: 2px solid #444;
  }

  .canvas {
    position: relative;
    flex: 1;
    overflow: hidden;
    background: #000;
  }

  .cross-h,
  .cross-v {
    position: absolute;
    background: #fff;
  }

  .cross-h {
    left: 0;
    right: 0;
    height: 1px;
  }

  .cross-v {
    top: 0;
    bottom: 0;
    width: 1px;
  }

  .pointer {
    position: absolute;
    width: 16px;
    height: 24px;
  }

  .ucs {
    position: absolute;
    left: 3px;
    bottom: 4px;
    width: 80px;
    height: 80px;
    overflow: visible;
    fill: #fff;
    font-size: 14px;
  }

  .layout-tabs {
    display: flex;
    flex: none;
    height: 15px;
  }

  .nav {
    width: 18px;
    height: 15px;
    border: 1px solid #fff;
    border-right-color: #8c8c8c;
    border-bottom-color: #8c8c8c;
    box-sizing: border-box;
  }

  .nav svg {
    display: block;
    width: 16px;
    height: 13px;
  }

  .tabs {
    display: flex;
    margin-left: 1px;
  }

  .tab {
    display: grid;
    width: 40px;
    height: 15px;
    line-height: 14px;
  }

  .tab > * {
    grid-area: 1 / 1;
  }

  .tab svg {
    width: 44px;
    height: 15px;
    fill: none;
    stroke: #000;
  }

  .tab.active {
    color: #fff;
  }

  .tab.active svg {
    fill: #000;
  }

  .tab span {
    z-index: 1;
    text-align: center;
  }

  .command {
    display: flex;
    flex: none;
    gap: 4px;
    margin-top: 4px;
    padding: 3px 0 2px 5px;
    border-top: 1px solid #000;
  }

  .command .grip {
    height: auto;
    margin: 3px 4px 4px 0;
  }

  .command-text {
    flex: 1;
    min-width: 0;
    border-top: 2px solid #222;
    border-left: 1px solid #222;
    background: #fff;
    font-family: 'Liberation Mono', 'Noto Sans CJK SC', monospace;
    font-size: 12px;
  }

  .history {
    box-sizing: border-box;
    height: 127px;
    padding-top: 1px;
    border-bottom: 1px solid #8c8c8c;
  }

  .history p {
    display: flex;
    height: 13px;
    margin: 0;
    padding-left: 1px;
    line-height: 13px;
  }

  .prompt {
    flex: none;
    width: 48px;
  }

  .entry {
    display: flex;
    height: 16px;
    padding-left: 1px;
    line-height: 16px;
  }

  .entry input {
    flex: 1;
    min-width: 0;
  }

  .status-bar {
    display: flex;
    flex: none;
    gap: 4px;
    padding: 3px 4px 0;
    border-top: 1px solid #fff;
    box-shadow: 0 -1px #8c8c8c;
  }

  .coords {
    box-sizing: border-box;
    width: 250px;
    height: 17px;
    padding-left: 1px;
    border: 1px solid #8c8c8c;
    border-bottom: 0;
    color: #8c8c8c;
    font-family: 'Liberation Mono', monospace;
    font-size: 10px;
    line-height: 18px;
  }

  .mode {
    height: 17px;
    padding: 0 1px;
    border: 1px solid #fff;
    border-right-color: #8c8c8c;
    border-bottom: 0;
    line-height: 17px;
    white-space: nowrap;
  }

  .mode.on {
    border-color: #000;
    border-right-color: #fff;
  }

  .mode.latin {
    font-family: 'Liberation Mono', monospace;
    font-size: 10px;
  }
</style>
